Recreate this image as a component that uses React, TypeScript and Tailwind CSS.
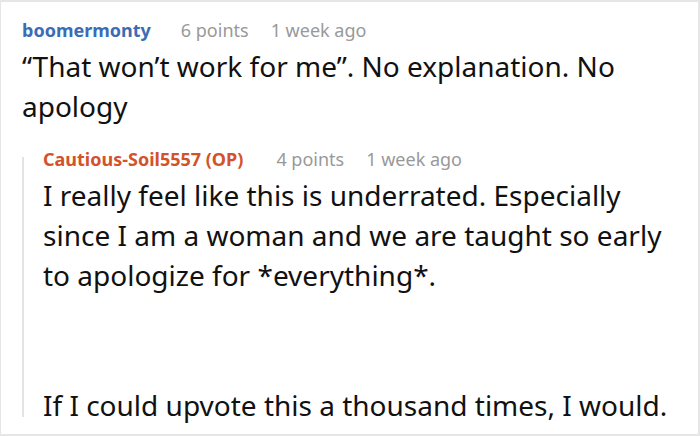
const font = { fontFamily: '"Noto Sans", "Open Sans", sans-serif' };

function Meta({ author, color, points, age, authorGap }: { author: string; color: string; points: string; age: string; authorGap: string }) {
  return (
    <div className="flex items-baseline text-[18px] leading-[24px]">
      <span className={`font-bold ${color}`}>{author}</span>
      <span className={`${authorGap} text-[#999999]`}>{points}</span>
      <span className="ml-[22px] text-[#999999]">{age}</span>
    </div>
  );
}

export default function App() {
  return (
    <div className="h-[436px] w-[700px] overflow-hidden bg-white" style={font}>
      <div className="h-full w-full border-t-2 border-r-2 border-b-2 border-l border-[#e6e6e6] pl-[21px] pt-[16px]">
        <Meta author="boomermonty" color="text-[#3b6cb5]" points="6 points" age="1 week ago" authorGap="ml-[30px]" />
        <p className="mt-[4px] text-[28px] leading-[40px] text-[#111111]">
          “That won’t work for me”. No explanation. No apology
        </p>
        <div className="mt-[21px] flex items-start">
          <div className="mt-[10px] h-[260px] w-[2px] shrink-0 bg-[#e3e3e3]" />
          <div className="pl-[19px]">
            <Meta author="Cautious-Soil5557 (OP)" color="text-[#d4522a]" points="4 points" age="1 week ago" authorGap="ml-[33px]" />
            <p className="mt-[4px] w-[640px] text-[28px] leading-[40px] text-[#111111]">
              I really feel like this is underrated. Especially since I am a woman and we are taught so early to apologize for *everything*.
            </p>
            <p className="mt-[90px] text-[28px] leading-[40px] text-[#111111]">
              If I could upvote this a thousand times, I would.
            </p>
          </div>
        </div>
      </div>
    </div>
  );
}
